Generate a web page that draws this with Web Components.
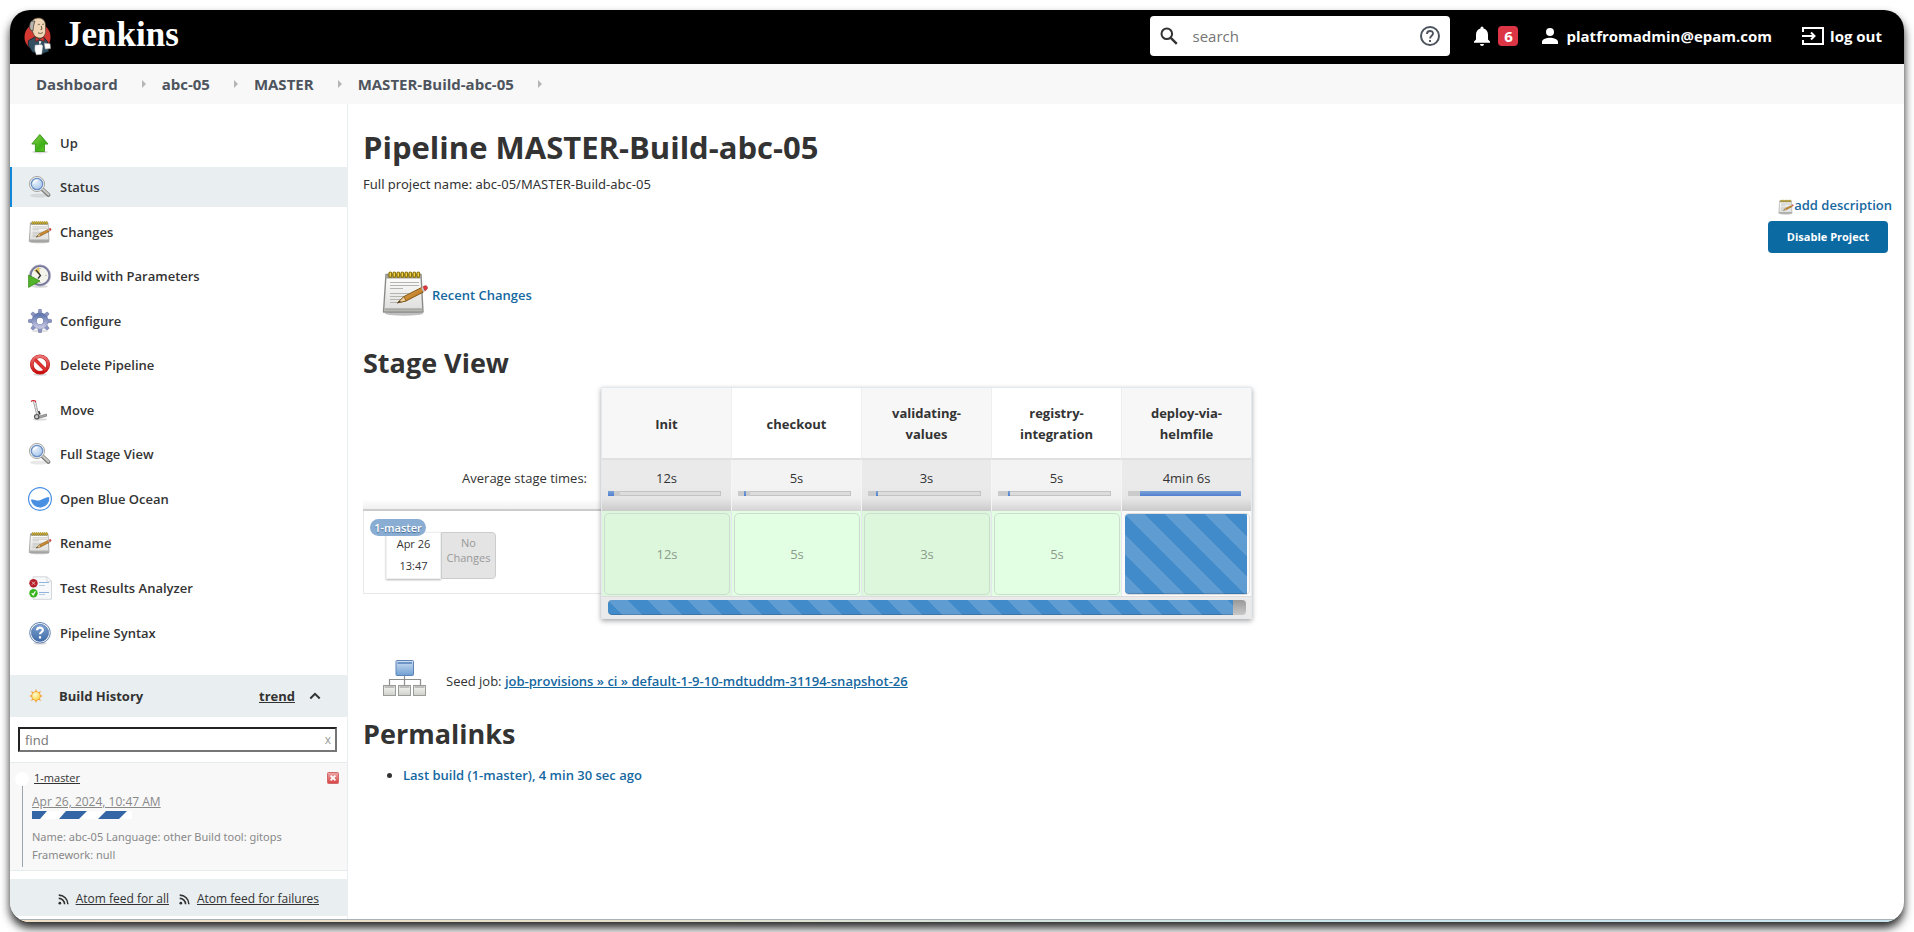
<!DOCTYPE html>
<html lang="en">
<head>
<meta charset="utf-8">
<meta name="viewport" content="width=device-width, initial-scale=1">
<title>Pipeline MASTER-Build-abc-05 [Jenkins]</title>
<style>
  body {
    margin: 0;
    background: #fff;
    color: #333;
    font: 13px/20px "Open Sans", "Noto Sans", sans-serif;
  }
</style>
</head>
<body>
<jk-page></jk-page>

<script>
const define = (name, html, setup) => {
  const template = document.createElement('template');
  template.innerHTML = `<style>*, *::before, *::after { box-sizing: border-box; }</style>${html}`;
  customElements.define(name, class extends HTMLElement {
    connectedCallback() {
      if (this.shadowRoot) return;
      const root = this.attachShadow({ mode: 'open' });
      root.append(template.content.cloneNode(true));
      if (setup) setup(this, root);
    }
  });
};

/* ---------- icons ---------- */
const magnifier = `
  <defs>
    <radialGradient id="lens" cx=".35" cy=".3" r=".8"><stop offset="0" stop-color="#e8f2fc"/><stop offset="1" stop-color="#a3c3ea"/></radialGradient>
  </defs>
  <ellipse cx="11" cy="20.500" rx="9" ry="2" fill="#000" opacity=".09"/>
  <path d="M13.500 13.500 20.500 20" stroke="#7f7f7d" stroke-width="4" stroke-linecap="round"/>
  <path d="M14.500 14 20.500 19.600" stroke="#c9c9c6" stroke-width="2" stroke-linecap="round"/>
  <circle cx="9" cy="9" r="7.600" fill="#f2f2f0" stroke="#a9aaa7" stroke-width="1"/>
  <circle cx="9" cy="9" r="5.700" fill="url(#lens)" stroke="#6a8fc4" stroke-width="1.200"/>
  <path d="M5.500 8.500c.3-2 2-3.300 4-3.200" stroke="#fff" stroke-width="1.200" fill="none"/>`;
const notepad = `
  <defs>
    <linearGradient id="paper" x1="0" y1="0" x2="0" y2="1"><stop offset="0" stop-color="#fff"/><stop offset="1" stop-color="#dcdcda"/></linearGradient>
    <linearGradient id="wood" x1="0" y1="0" x2="1" y2="1"><stop offset="0" stop-color="#f0b25a"/><stop offset="1" stop-color="#a5650f"/></linearGradient>
  </defs>
  <ellipse cx="23" cy="44.500" rx="19" ry="2.200" fill="#000" opacity=".25"/>
  <path d="M5 5.500h35l2 37.500H2.500z" fill="url(#paper)" stroke="#8b8b88" stroke-width="1.400" stroke-linejoin="round"/>
  <path d="M5.500 6h34l.3 3.500H5.200z" fill="#9b9b97"/>
  <path d="M3.600 40.500h37.800" stroke="#a8a8a5" stroke-width="2.600"/>
  <g stroke="#b4b4b1" stroke-width="1.200"><path d="M9 13.500h29M9 16.500h29M9 19.500h13M9 24.500h24M9 27.500h18M9 30.500h18M9 33.500h10"/></g>
  <g fill="#e9d34a" stroke="#8f7208" stroke-width="1.200">
    <rect x="8" y="3" width="2.600" height="5.400" rx="1.300"/><rect x="12" y="3" width="2.600" height="5.400" rx="1.300"/><rect x="16" y="3" width="2.600" height="5.400" rx="1.300"/><rect x="20" y="3" width="2.600" height="5.400" rx="1.300"/><rect x="24" y="3" width="2.600" height="5.400" rx="1.300"/><rect x="28" y="3" width="2.600" height="5.400" rx="1.300"/><rect x="32" y="3" width="2.600" height="5.400" rx="1.300"/><rect x="36" y="3" width="2.600" height="5.400" rx="1.300"/>
  </g>
  <path d="M16.500 33.800 23 27.500 40.500 18.500 42.500 23 25 32z" fill="url(#wood)" stroke="#7a4e0e" stroke-width=".9" stroke-linejoin="round"/>
  <path d="M16.500 33.800 23 27.500 25 32z" fill="#ecd2a2" stroke="#7a4e0e" stroke-width=".7"/>
  <path d="m16.500 33.800 2.300-2.100 1 1.400z" fill="#333"/>
  <path d="m40.200 18.700 1.700-.9 2 4.400-1.700.9z" fill="#c9cdd2"/>
  <path d="m42 17.700 2-1c2-.5 3.400 2.300 1.900 3.500L44 22.100z" fill="#dd3a3a" stroke="#9c1717" stroke-width=".5"/>`;
const cogTeeth = [0, 45, 90, 135, 180, 225, 270, 315].map(a => `<path d="M10 5 10.700.5h2.600L14 5z" transform="rotate(${a} 12 12)"/>`).join('');
const sunRays = [0, 45, 90, 135, 180, 225, 270, 315].map(a => `<path d="M10.400 6 12 1l1.600 5z" transform="rotate(${a} 12 12)"/>`).join('');

const ICONS = {
  up: ['0 0 24 24', `
    <defs><linearGradient id="g" x1="0" y1="0" x2="1" y2="1"><stop offset="0" stop-color="#8fd44c"/><stop offset=".6" stop-color="#3fb018"/><stop offset="1" stop-color="#6ed02e"/></linearGradient></defs>
    <ellipse cx="12" cy="21" rx="8" ry="1.500" fill="#000" opacity=".15"/>
    <path d="M11.800 3.500 20 13h-3.600v7.500H7.400V13H3.800z" fill="url(#g)" stroke="#3f9a1c" stroke-linejoin="round"/>`],
  search: ['0 0 24 24', magnifier],
  notepad: ['0 0 48 48', notepad],
  build: ['0 0 24 24', `
    <ellipse cx="12" cy="22.500" rx="8" ry="1.300" fill="#000" opacity=".15"/>
    <circle cx="12" cy="11.500" r="9.600" fill="#f4f3ec" stroke="#77779c" stroke-width="2.200"/>
    <circle cx="12" cy="11.500" r="10.700" fill="none" stroke="#c4c4d6" stroke-width=".6"/>
    <path d="M12 11.500 6 6.500 11 3z" fill="#e2c35a"/>
    <path d="M8 6l4.500 5.500-2.500 3" fill="none" stroke="#333" stroke-width="1.300"/>
    <path d="M12 4v1M18.500 11.500h-1M12 19v-1" stroke="#999"/>
    <path d="M.6 11 12 17 .6 23.400z" fill="#52b42a" stroke="#3a8a1b" stroke-width=".8"/>`],
  cog: ['0 0 24 24', `
    <defs><linearGradient id="g" x1="0" y1="0" x2="0" y2="1"><stop offset="0" stop-color="#6379b0"/><stop offset="1" stop-color="#c3c3e0"/></linearGradient></defs>
    <ellipse cx="12" cy="22" rx="8" ry="1.500" fill="#000" opacity=".12"/>
    <g fill="#8c96c2" stroke="#66709f" stroke-width=".6">${cogTeeth}</g>
    <circle cx="12" cy="12" r="5.800" fill="none" stroke="#66709f" stroke-width="5"/>
    <circle cx="12" cy="12" r="5.800" fill="none" stroke="url(#g)" stroke-width="4.400"/>`],
  stop: ['0 0 24 24', `
    <defs><linearGradient id="g" x1="0" y1="0" x2="0" y2="1"><stop offset="0" stop-color="#ee7777"/><stop offset="1" stop-color="#cc0d0d"/></linearGradient></defs>
    <ellipse cx="12" cy="21.500" rx="7" ry="1.300" fill="#000" opacity=".15"/>
    <circle cx="12" cy="11.500" r="8.200" fill="#fff" stroke="#b81414" stroke-width="3.600"/>
    <path d="m6.500 6 11 11" stroke="#c81b1b" stroke-width="3.400"/>
    <circle cx="12" cy="11.500" r="8.200" fill="none" stroke="url(#g)" stroke-width="2.600"/>
    <path d="m6.500 6 11 11" stroke="#dd3535" stroke-width="2.400"/>`],
  move: ['0 0 24 24', `
    <ellipse cx="12" cy="21.500" rx="7" ry="1" fill="#000" opacity=".15"/>
    <path d="M5.500 3.500 9 18M7.500 3l3 14" stroke="#a2a2a2" stroke-width="1" fill="none"/>
    <path d="M6.500 7h2.500M7.300 11H10" stroke="#b5b5b5"/>
    <path d="M3 3.400l2-.9 2 .3.800 1.400" stroke="#d01f2e" stroke-width="1.200" fill="none"/>
    <path d="m10 18.500 8.500-2.500v2.200L10 20.500z" fill="#a9a9a9" stroke="#777" stroke-width=".7"/>
    <path d="m10.700 13 1.300 3.500" stroke="#333" stroke-width="1.600"/>
    <circle cx="8.700" cy="18.700" r="2.200" fill="#ccc" stroke="#555" stroke-width="1.200"/>`],
  ocean: ['0 0 24 24', `
    <circle cx="12" cy="12" r="11.400" fill="#fff" stroke="#4a90e2" stroke-width="1.200"/>
    <path d="M2.800 12.800c3-1 5 1.200 8 .7 3.500-.5 5.500-3.500 10.600-3.300A9.400 9.400 0 0 1 2.800 12.800z" fill="#4a90e2"/>`],
  results: ['0 0 24 24', `
    <path d="M5 .8h14l4.500 4.500v18H5z" fill="#f7f8fa" stroke="#d3d6da" stroke-width="1"/>
    <path d="M19 .8v4.500h4.500z" fill="#fff" stroke="#cfd3d8" stroke-width=".8"/>
    <path d="M11 6.500h10M11 16.500h10" stroke="#8fb3dc"/><path d="M11 9.500h6M11 18.500h6" stroke="#b5cbe6"/>
    <circle cx="5.500" cy="7.200" r="4.200" fill="#b3202a"/><path d="m4 5.700 3 3m0-3-3 3" stroke="#f0c0c0" stroke-width="1"/>
    <circle cx="5.500" cy="17.200" r="4.200" fill="#37b51e"/><path d="m3.700 17.200 1.500 1.700 2.200-3.600" stroke="#fff" stroke-width="1.200" fill="none"/>`],
  help: ['0 0 24 24', `
    <defs><linearGradient id="g" x1="0" y1="0" x2="0" y2="1"><stop offset="0" stop-color="#7fa3d2"/><stop offset="1" stop-color="#3f6ca8"/></linearGradient></defs>
    <ellipse cx="12" cy="22.300" rx="7" ry="1.200" fill="#000" opacity=".15"/>
    <circle cx="12" cy="11.800" r="10.300" fill="#fff" stroke="#5e7fae" stroke-width="1"/>
    <circle cx="12" cy="11.800" r="8.600" fill="url(#g)" stroke="#3c639b" stroke-width=".6"/>
    <path d="M9 9.300c.2-3.600 6-3.300 5.900-.2 0 2-2.900 2-2.900 4.200M12 15.200v2.200" stroke="#fff" stroke-width="2.200" fill="none"/>`],
  sun: ['0 0 24 24', `
    <defs><radialGradient id="g" cx=".4" cy=".35" r=".7"><stop offset="0" stop-color="#fffbd0"/><stop offset="1" stop-color="#fbd23c"/></radialGradient></defs>
    <g fill="#f4a63a">${sunRays}</g>
    <circle cx="12" cy="12" r="6.600" fill="url(#g)" stroke="#f2a03d" stroke-width="1.300"/>`],
  chevron: ['0 0 12 8', `<path d="m1.300 6.500 4.700-4.700 4.700 4.700" fill="none" stroke="#333" stroke-width="2"/>`],
  rss: ['0 0 12 12', `<circle cx="2" cy="10" r="1.500" fill="#333"/><path d="M.8 4.800a6.400 6.400 0 0 1 6.400 6.400M.8 1.200a10 10 0 0 1 10 10" fill="none" stroke="#333" stroke-width="1.700"/>`],
  cancel: ['0 0 12 12', `
    <defs><linearGradient id="g" x1="0" y1="0" x2="0" y2="1"><stop offset="0" stop-color="#efaaaa"/><stop offset="1" stop-color="#d94141"/></linearGradient></defs>
    <rect x=".5" y=".5" width="11" height="11" rx="1" fill="url(#g)" stroke="#d06a6a"/><path d="m3.600 3.600 4.800 4.800m0-4.800L3.600 8.400" stroke="#fff" stroke-width="1.700"/>`],
  find: ['0 0 18 18', `<circle cx="6.800" cy="6.800" r="5.300" fill="none" stroke="#333" stroke-width="2"/><path d="m10.800 10.800 6 6" stroke="#333" stroke-width="2.400"/>`],
  question: ['0 0 20 20', `<circle cx="10" cy="10" r="9" fill="none" stroke="#4d545d" stroke-width="2"/><path d="M7 8c0-4 6-4 6-.4 0 2.200-2.900 2.300-2.900 4.900M10 14v2" fill="none" stroke="#4d545d" stroke-width="1.900"/>`],
  bell: ['0 0 16 20', `<path d="M8 20a2 2 0 0 0 2-2H6a2 2 0 0 0 2 2zM14 13.500V8.800C14 5.700 12.400 3.200 9.500 2.500V1.900a1.500 1.500 0 0 0-3 0v.6C3.600 3.200 2 5.700 2 8.800v4.700l-2 2v1.200h16v-1.200z" fill="#fff"/>`],
  person: ['0 0 16 16', `<path d="M8 8a4 4 0 1 0 0-8 4 4 0 0 0 0 8zm0 1.800c-2.700 0-8 1.300-8 4V16h16v-2.200c0-2.700-5.300-4-8-4z" fill="#fff"/>`],
  logout: ['0 0 22 18', `<path d="M1 5V1h20v16H1v-4" fill="none" stroke="#fff" stroke-width="2"/><path d="M0 9h12M9 5.500 12.500 9 9 12.500" fill="none" stroke="#fff" stroke-width="2"/>`],
  tree: ['0 0 48 48', `
    <defs>
      <linearGradient id="b" x1="0" y1="0" x2="0" y2="1"><stop offset="0" stop-color="#cfe0f3"/><stop offset="1" stop-color="#6f9fd3"/></linearGradient>
      <linearGradient id="w" x1="0" y1="0" x2="0" y2="1"><stop offset="0" stop-color="#f7f7f5"/><stop offset="1" stop-color="#cfd0cb"/></linearGradient>
    </defs>
    <path d="M23.500 18v12M8.500 30v-7.500h31V30" fill="none" stroke="#8d8f8b" stroke-width="1.200"/>
    <rect x="15" y="3.500" width="17.500" height="15" rx="1" fill="url(#b)" stroke="#5f85b8"/><path d="M16.500 6h14.500" stroke="#5c86bd" stroke-width="1.600"/>
    <g fill="url(#w)" stroke="#9a9c97"><rect x="2.500" y="28.500" width="12" height="10"/><rect x="17.500" y="28.500" width="12" height="10"/><rect x="32.500" y="28.500" width="12" height="10"/></g>
    <path d="M3.500 30h10M18.500 30h10M33.500 30h10" stroke="#8e908b" stroke-width="1.200"/>`],
  butler: ['0 0 28 40', `
    <ellipse cx="14" cy="21" rx="13.500" ry="14" fill="#d33833"/>
    <path d="M4.500 25 12 20.500l8 .5 4.500 5 1 10-8 3-9-2.500-4-7z" fill="#335061" stroke="#0e1c26" stroke-width=".8"/>
    <path d="M6.500 9C7 4 11 1 15.500 1.300c4.500.3 7 3.500 6.800 8.200l.2 5.500c-.2 4-2.500 7-5.500 7.200-4 .2-7.200-2.700-8-6.700C6.500 14.500 6 11.500 6.500 9z" fill="#f0d6b7" stroke="#54442f" stroke-width=".8"/>
    <path d="M7.500 4.500c-2 3-2.400 7-.5 9.500l2.300.8c.6-2.300.2-5 1-6.800l1-3.500z" fill="#b9b3ab" stroke="#333" stroke-width=".7"/>
    <path d="M14.300 8.500c.7-.8 1.600-.8 2.200-.2M18.800 8.200c.7-.6 1.500-.6 2 0M17.800 9.500l.8 3.500-1.500.4M14.500 16.600c1.500 1 3.500 1 5-.2" fill="none" stroke="#54442f" stroke-width=".9"/>
    <path d="m12 21 4 2.500 4.500-2.500.5 4.500-5-1.500-4 1.500z" fill="#d33833" stroke="#6b1512" stroke-width=".6"/>
    <path d="m15.500 25.500.8 4 1.800-4z" fill="#fff"/>
    <path d="M11.500 29.500 18.500 29l.8 1.500-1 8.500-5.500.5-1.500-5z" fill="#fff" stroke="#ccc" stroke-width=".5"/>
    <path d="m21 27.500 6 .5.500 5-5.500.5z" fill="#fff" stroke="#aaa" stroke-width=".6"/>`]
};

define('jk-icon', `
  <style>
    :host { display: inline-flex; flex: none; width: 24px; height: 24px; }
    svg { display: block; width: 100%; height: 100%; }
  </style>`, (host, root) => {
  const [box, art] = ICONS[host.getAttribute('name')];
  root.innerHTML += `<svg viewBox="${box}" fill="none" aria-hidden="true">${art}</svg>`;
});

/* ---------- top bar ---------- */
define('jk-header', `
  <style>
    :host { display: flex; align-items: center; height: 54px; padding: 0 22px 2px 14px; background: #000; color: #fff; font-size: 15px; font-weight: 700; }
    a { color: inherit; text-decoration: none; display: flex; align-items: center; }
    .logo { gap: 13px; font: 700 35px/40px "Liberation Serif", serif; }
    .logo jk-icon { width: 27px; height: 40px; }
    .logo span { padding-bottom: 2px; }
    form { display: flex; align-items: center; width: 300px; height: 40px; margin: 0 40px 0 auto; padding: 0 10px; background: #fff; border-radius: 4px; gap: 14px; }
    form jk-icon { width: 18px; height: 18px; }
    form a jk-icon { width: 20px; height: 20px; }
    input { flex: 1; min-width: 0; border: 0; padding: 0; outline: 0; background: none; font: 400 15px/20px "Open Sans", sans-serif; color: #333; }
    input::placeholder { color: #757575; opacity: 1; }
    .bell jk-icon { width: 16px; height: 20px; margin-left: -16px; }
    .badge { margin-left: 8px; width: 20px; line-height: 20px; border-radius: 4px; background: #dc3545; text-align: center; }
    .user { margin-left: 24px; gap: 8px; }
    .user jk-icon { width: 16px; height: 16px; }
    .out { margin-left: 30px; gap: 6px; }
    .out jk-icon { width: 22px; height: 18px; }
  </style>
  <a class="logo" href="#"><jk-icon name="butler"></jk-icon><span>Jenkins</span></a>
  <form><jk-icon name="find"></jk-icon><input type="text" placeholder="search" aria-label="Search"><a href="#" aria-label="Search help"><jk-icon name="question"></jk-icon></a></form>
  <a class="bell" href="#"><jk-icon name="bell"></jk-icon><span class="badge">6</span></a>
  <a class="user" href="#"><jk-icon name="person"></jk-icon><span>platfromadmin@epam.com</span></a>
  <a class="out" href="#"><jk-icon name="logout"></jk-icon><span>log out</span></a>`);

define('jk-breadcrumbs', `
  <style>
    :host { display: block; background: #f8f8f8; }
    ol { display: flex; list-style: none; margin: 0; padding: 0 26px; height: 40px; align-items: center; }
    li { display: flex; align-items: center; font-size: 15px; font-weight: 700; }
    li::after { content: ""; margin: 0 16px 0 24px; border: solid transparent; border-width: 4px 0 4px 4px; border-left-color: #b5b5b5; }
    a { color: #4d545d; text-decoration: none; }
  </style>
  <ol><li><a href="#">Dashboard</a></li><li><a href="#">abc-05</a></li><li><a href="#">MASTER</a></li><li><a href="#">MASTER-Build-abc-05</a></li></ol>`);

/* ---------- side panel ---------- */
define('jk-task', `
  <style>
    :host { display: block; }
    a { display: flex; align-items: center; gap: 8px; height: 40px; padding-left: 18px; color: #333; text-decoration: none; font-weight: 600; }
    :host([active]) a { background: #e9eef1; border-left: 2px solid #1288dd; padding-left: 16px; }
  </style>
  <a href="#"><span><slot></slot></span></a>`, (host, root) => {
  const icon = document.createElement('jk-icon');
  icon.setAttribute('name', host.getAttribute('icon'));
  root.querySelector('a').prepend(icon);
});

define('jk-build-history', `
  <style>
    :host { display: block; }
    header { display: flex; align-items: center; height: 42px; padding: 0 26px 0 18px; background: #e9eef1; font-size: 13px; font-weight: 700; }
    header jk-icon { width: 16px; height: 16px; }
    header h2 { margin: 0 auto 0 15px; font: inherit; }
    header jk-icon:last-child { width: 12px; height: 8px; margin-left: 14px; }
    a { color: #333; }
    .find { display: flex; align-items: center; height: 25px; margin: 10px 10px 10px 8px; padding: 0 4px 0 5px; border: 2px solid #767676; border-top-color: #222; border-left-color: #222; }
    .find input { flex: 1; min-width: 0; border: 0; outline: 0; padding: 0; background: none; font: 13px/20px "Open Sans", sans-serif; }
    .find input::placeholder { color: #757575; opacity: 1; }
    .find button { border: 0; padding: 0; background: none; color: #999; font: 12px/16px "Open Sans", sans-serif; }
    .build { position: relative; height: 109px; padding: 6px 8px 0 22px; background: #f8f8f8; border: solid #e3eded; border-width: 1px 0; font-size: 11px; line-height: 18px; color: #888; }
    .build::before { content: ""; position: absolute; left: 12px; top: 20px; bottom: 3px; width: 1px; background: #9aa7b0; }
    .build::after { content: ""; position: absolute; left: 5px; top: 9px; width: 14px; height: 14px; border-radius: 7px; background: #fff; }
    .top { display: flex; justify-content: space-between; align-items: center; padding-left: 2px; font-weight: 500; }
    .top jk-icon { width: 12px; height: 12px; }
    .date { display: block; margin-top: 6px; color: #888; font-size: 12px; }
    .bar { display: block; width: 100px; height: 8px; }
    p { margin: 9px 0 0; font-family: "Noto Sans", sans-serif; }
    footer { display: flex; align-items: center; justify-content: flex-end; height: 37px; margin-top: 8px; padding: 3px 28px 0 0; background: #e9eef1; font-size: 12px; font-weight: 400; }
    footer a { margin-left: 7px; }
    footer a + jk-icon { margin-left: 10px; }
    footer jk-icon { width: 11px; height: 11px; }
  </style>
  <header><jk-icon name="sun"></jk-icon><h2>Build History</h2><a href="#">trend</a><jk-icon name="chevron"></jk-icon></header>
  <div class="find"><input type="text" placeholder="find" aria-label="Find build"><button type="button" aria-label="Clear">x</button></div>
  <div class="build">
    <div class="top"><a href="#">1-master</a><jk-icon name="cancel"></jk-icon></div>
    <a class="date" href="#">Apr 26, 2024, 10:47 AM</a>
    <svg class="bar" viewBox="0 0 100 8"><rect width="100" height="8" fill="#fff"/><path d="M0 0h15L8 8H0zM34 0h21l-8 8H27zM74 0h21l-8 8H66z" fill="#3465a4"/></svg>
    <p>Name: abc-05 Language: other Build tool: gitops<br>Framework: null</p>
  </div>
  <footer><jk-icon name="rss"></jk-icon><a href="#">Atom feed for all</a><jk-icon name="rss"></jk-icon><a href="#">Atom feed for failures</a></footer>`);

define('jk-side-panel', `
  <style>
    :host { display: block; flex: none; width: 338px; border-right: 1px solid #e9eef1; }
    nav { display: block; padding: 19px 0 22px; }
    jk-task { margin-bottom: 5px; }
    jk-task:nth-child(odd) { margin-bottom: 4px; }
    jk-task:nth-child(11) { margin-bottom: 5px; }
    jk-task:last-child { margin-bottom: 0; }
  </style>
  <nav>
    <jk-task icon="up">Up</jk-task>
    <jk-task icon="search" active>Status</jk-task>
    <jk-task icon="notepad">Changes</jk-task>
    <jk-task icon="build">Build with Parameters</jk-task>
    <jk-task icon="cog">Configure</jk-task>
    <jk-task icon="stop">Delete Pipeline</jk-task>
    <jk-task icon="move">Move</jk-task>
    <jk-task icon="search">Full Stage View</jk-task>
    <jk-task icon="ocean">Open Blue Ocean</jk-task>
    <jk-task icon="notepad">Rename</jk-task>
    <jk-task icon="results">Test Results Analyzer</jk-task>
    <jk-task icon="help">Pipeline Syntax</jk-task>
  </nav>
  <jk-build-history></jk-build-history>`);

/* ---------- stage view ---------- */
define('jk-stage-view', `
  <style>
    :host { display: block; }
    table { position: relative; width: 889px; table-layout: fixed; border-collapse: separate; border-spacing: 0; text-align: center; }
    table::after { content: ""; position: absolute; inset: 0 0 0 238px; border: 1px solid #e3e9ec; box-shadow: 0 2px 5px rgba(0, 0, 0, .35); pointer-events: none; }
    col:first-child { width: 239px; }
    th, td { padding: 0; }
    .names th { height: 73px; padding: 3px 16px 0; border-right: 1px solid #eee; border-bottom: 2px solid #e0e0e0; font-weight: 700; font-size: 13px; line-height: 21px; }
    .names th:nth-child(even) { background: #f7f7f7; }
    .names th:first-child { border: 0; }
    .avg > * { height: 51px; vertical-align: top; }
    .avg th { padding: 8px 15px 0; text-align: right; font-weight: 400; line-height: 20px; border-bottom: 2px solid #ccc; background: linear-gradient(#fff 80%, #f0f0f0); }
    .avg td { padding: 8px 0 0; line-height: 20px; border-right: 1px solid #f5f5f5; background: linear-gradient(#f3f3f3 50%, #f0f0f0 75%, #d4d4d4); }
    .avg td:nth-child(even) { background: linear-gradient(#eaeaea 50%, #e6e6e6 75%, #cacaca); }
    .meter { display: flex; height: 5px; margin: 3px 10px 0 6px; border: 1px solid #c3c3c3; background: #ddd; }
    .meter i { height: 5px; margin: -1px 0 0 -1px; background: #cbcbcb; }
    .meter b { height: 5px; margin-top: -1px; background: linear-gradient(#7ba3d6, #4f7fd1); }
    .run > * { height: 85px; }
    .run th { padding: 0 0 2px; font-weight: 400; vertical-align: top; text-align: left; }
    .label { height: 83px; border: solid #e8e8e8; border-width: 0 0 1px 1px; padding: 8px 0 0 6px; }
    .tag { display: block; position: relative; width: 56px; border-radius: 9px; background: #8aadd3; color: #fff; font-size: 11px; line-height: 17px; font-weight: 600; text-align: center; text-shadow: 0 1px 1px #46698f; }
    .boxes { display: flex; margin: -4px 0 0 16px; font-size: 11px; text-align: center; }
    .when { width: 55px; height: 47px; border: 1px solid #eef1f1; background: #fff; box-shadow: 0 1px 2px rgba(0, 0, 0, .3); line-height: 22px; }
    .none { width: 55px; height: 47px; padding-top: 2px; border: 1px solid #ccc; border-radius: 0 4px 4px 0; background: #e4e4e4; color: #999; line-height: 15px; }
    .run td { padding: 2px 1px 1px 2px; background: #e3ffe3; border-right: 1px solid #e6e6f0; }
    .run td:nth-child(even) { background: #ddf7dd; }
    .run td div { height: 82px; border: 1px solid #ccdccf; border-radius: 5px; line-height: 80px; color: #8b9c8b; }
    .run td:last-child { background: #fafafa; }
    .run td:last-child div { border-color: #ddd; border-left-width: 0; padding: 0 2px 0 1px; }
    .run td:last-child span { display: block; height: 80px; }
    .stripes, .run td:last-child span { border-radius: 4px 0 0 4px; background: linear-gradient(45deg, rgba(255,255,255,.15) 25%, transparent 25%, transparent 50%, rgba(255,255,255,.15) 50%, rgba(255,255,255,.15) 75%, transparent 75%) 0 0 / 40px 40px #428bca; box-shadow: inset 0 -1px 0 rgba(0, 0, 0, .15); }
    .total td { height: 23px; padding: 0 6px 2px; background: #eaeaea; border-top: 1px solid #ddd; }
    .track { height: 15px; border-radius: 4px; background: linear-gradient(#999, #c8c8c8); overflow: hidden; padding-right: 13px; }
    .track .stripes { height: 15px; }
  </style>
  <table>
    <colgroup><col><col><col><col><col><col></colgroup>
    <thead>
      <tr class="names"><th></th><th>Init</th><th>checkout</th><th>validating-<br>values</th><th>registry-<br>integration</th><th>deploy-via-<br>helmfile</th></tr>
      <tr class="avg"><th>Average stage times:</th>
        <td>12s<div class="meter"><i style="width:0"></i><b style="width:6px"></b><i style="width:6px;margin-left:0"></i></div></td>
        <td>5s<div class="meter"><i style="width:6px"></i><b style="width:2px"></b><i style="width:4px;margin-left:0"></i></div></td>
        <td>3s<div class="meter"><i style="width:8px"></i><b style="width:2px"></b></div></td>
        <td>5s<div class="meter"><i style="width:10px"></i><b style="width:2px"></b></div></td>
        <td>4min 6s<div class="meter"><i style="width:12px"></i><b style="flex:1;margin-right:-1px"></b></div></td></tr>
    </thead>
    <tbody>
      <tr class="run"><th><div class="label"><span class="tag">1-master</span><div class="boxes"><div class="when">Apr 26<br>13:47</div><div class="none">No<br>Changes</div></div></div></th>
        <td><div>12s</div></td><td><div>5s</div></td><td><div>3s</div></td><td><div>5s</div></td><td><div><span></span></div></td></tr>
      <tr class="total"><th></th><td colspan="5"><div class="track"><div class="stripes"></div></div></td></tr>
    </tbody>
  </table>`);

/* ---------- main panel ---------- */
define('jk-main', `
  <style>
    :host { display: block; flex: 1; min-width: 0; padding: 23px 12px 0 15px; }
    h1, h2, p, ul { margin: 0; }
    h1 { font-size: 31px; line-height: 40px; }
    h2 { font-size: 27px; line-height: 36px; }
    a { color: #1668a0; font-weight: 600; text-decoration: none; }
    .name { margin-top: 7px; font-family: "Noto Sans", sans-serif; }
    .tools { display: flex; flex-direction: column; align-items: flex-end; gap: 6px; margin-top: 1px; }
    .tools a { display: flex; align-items: center; }
    .tools jk-icon { width: 16px; height: 16px; margin-top: 4px; }
    button { height: 32px; width: 120px; margin-right: 4px; padding: 0; border: 0; border-radius: 4px; background: #0b6aa2; color: #fff; font: 700 11px/20px "Open Sans", sans-serif; }
    .changes, .seed { display: flex; align-items: center; padding-left: 18px; }
    .changes { gap: 3px; margin: 16px 0 28px; }
    .changes a { padding-top: 4px; }
    .seed { gap: 17px; margin: 38px 0 11px; }
    .seed a { text-decoration: underline; }
    .changes jk-icon, .seed jk-icon { width: 48px; height: 48px; }
    jk-stage-view { margin-top: 6px; }
    ul { margin-top: 13px; padding-left: 40px; }
  </style>
  <h1>Pipeline MASTER-Build-abc-05</h1>
  <p class="name">Full project name: abc-05/MASTER-Build-abc-05</p>
  <div class="tools"><a href="#"><jk-icon name="notepad"></jk-icon>add description</a><button type="button">Disable Project</button></div>
  <div class="changes"><jk-icon name="notepad"></jk-icon><a href="#">Recent Changes</a></div>
  <h2>Stage View</h2>
  <jk-stage-view></jk-stage-view>
  <div class="seed"><jk-icon name="tree"></jk-icon><p>Seed job: <a href="#">job-provisions » ci » default-1-9-10-mdtuddm-31194-snapshot-26</a></p></div>
  <h2>Permalinks</h2>
  <ul><li><a href="#">Last build (1-master), 4 min 30 sec ago</a></li></ul>`);

define('jk-page', `
  <style>
    :host { display: block; padding: 10px; }
    .window { display: flex; flex-direction: column; min-height: calc(100vh - 20px); border-radius: 20px; overflow: hidden; background: #fff; box-shadow: 0 6px 10px rgba(0, 0, 0, .85); }
    .body { display: flex; flex: 1; }
    .edge { height: 3px; border-top: 1px solid #a9b3b5; background: linear-gradient(90deg, #f0dfc5, #e6e0c8 30%, #c8e6ea 70%, #c8e6f0); }
  </style>
  <div class="window">
    <jk-header></jk-header>
    <jk-breadcrumbs></jk-breadcrumbs>
    <div class="body"><jk-side-panel></jk-side-panel><jk-main></jk-main></div>
    <div class="edge"></div>
  </div>`);
</script>
</body>
</html>
